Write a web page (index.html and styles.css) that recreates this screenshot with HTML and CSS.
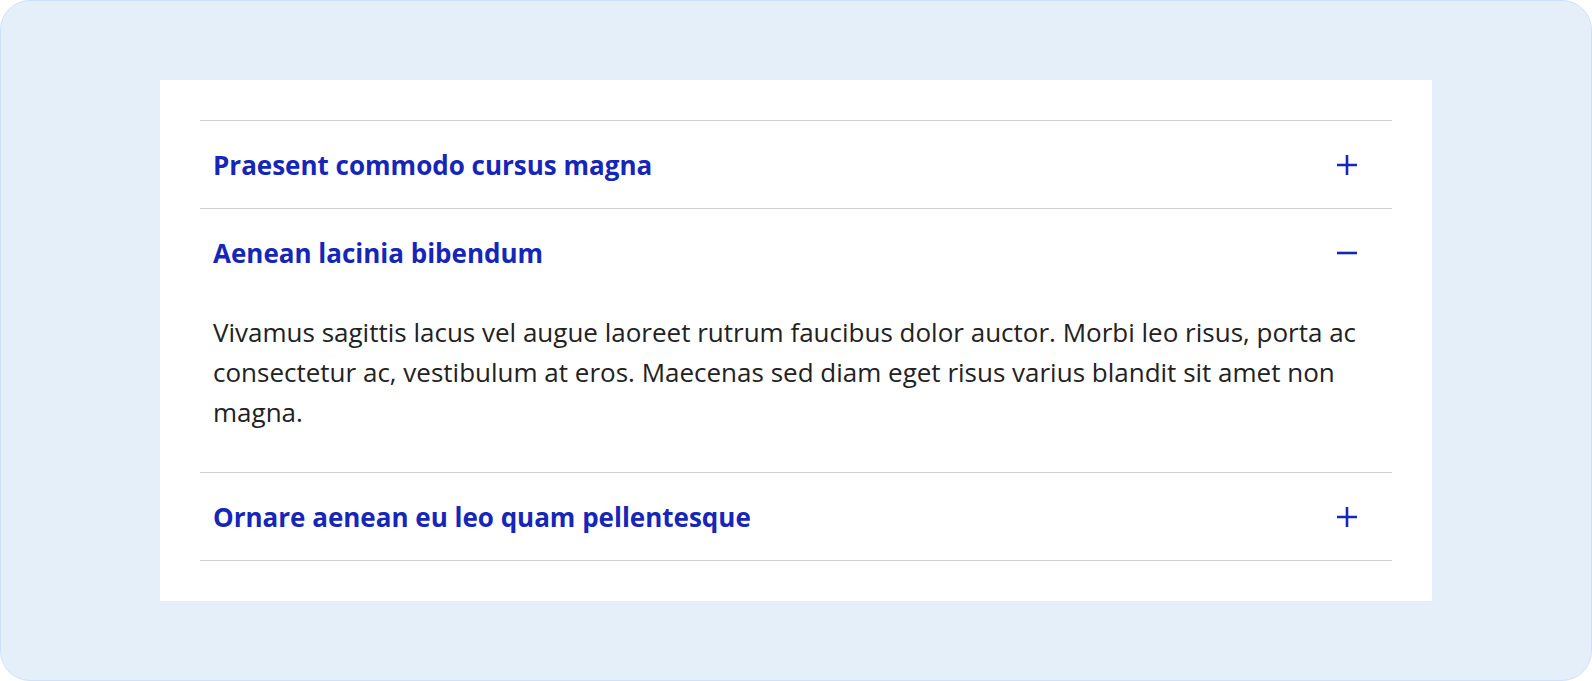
FILE: index.html
```html
<!DOCTYPE html>
<html lang="en">
<head>
  <meta charset="UTF-8">
  <meta name="viewport" content="width=device-width, initial-scale=1.0">
  <title>Accordion</title>
  <link rel="stylesheet" href="styles.css">
</head>
<body>
  <div class="frame">
    <div class="panel">
      <div class="accordion">

        <div class="item">
          <button class="item-header">
            <span class="item-title">Praesent commodo cursus magna</span>
            <svg class="icon" viewBox="0 0 22 22" width="22" height="22">
              <path d="M1 11H21M11 1V21" />
            </svg>
          </button>
        </div>

        <div class="item open">
          <button class="item-header">
            <span class="item-title">Aenean lacinia bibendum</span>
            <svg class="icon" viewBox="0 0 22 22" width="22" height="22">
              <path d="M1 11H21" />
            </svg>
          </button>
          <div class="item-body">
            <p>Vivamus sagittis lacus vel augue laoreet rutrum faucibus dolor auctor. Morbi leo risus, porta ac consectetur ac, vestibulum at eros. Maecenas sed diam eget risus varius blandit sit amet non magna.</p>
          </div>
        </div>

        <div class="item">
          <button class="item-header">
            <span class="item-title">Ornare aenean eu leo quam pellentesque</span>
            <svg class="icon" viewBox="0 0 22 22" width="22" height="22">
              <path d="M1 11H21M11 1V21" />
            </svg>
          </button>
        </div>

      </div>
    </div>
  </div>
</body>
</html>
```

FILE: styles.css
```css
html, body {
  margin: 0;
  height: 100%;
}
body {
  font-family: "Open Sans", "Noto Sans", sans-serif;
  background-color: #ffffff;
}
.frame {
  box-sizing: border-box;
  height: 100%;
  display: flex;
  align-items: center;
  justify-content: center;
  background-color: #e5effa;
  border: 1px solid #cfe1f8;
  border-radius: 30px;
}
.panel {
  box-sizing: border-box;
  width: 1272px;
  padding: 40px;
  background-color: #ffffff;
}
.item {
  border-top: 1px solid #cfcfcf;
}
.item:last-child {
  border-bottom: 1px solid #cfcfcf;
}
.item-header {
  display: flex;
  align-items: center;
  justify-content: space-between;
  width: 100%;
  height: 87px;
  padding: 0 34px 0 13px;
  background: none;
  border: none;
  font: inherit;
  cursor: pointer;
}
.item-title {
  font-size: 26px;
  font-weight: 700;
  color: #1526b8;
}
.icon {
  fill: none;
  stroke: #1526b8;
  stroke-width: 2.6;
}
.item-body {
  padding: 16px 20px 40px 13px;
}
.item-body p {
  margin: 0;
  font-size: 26px;
  line-height: 40px;
  color: #222222;
}
```
